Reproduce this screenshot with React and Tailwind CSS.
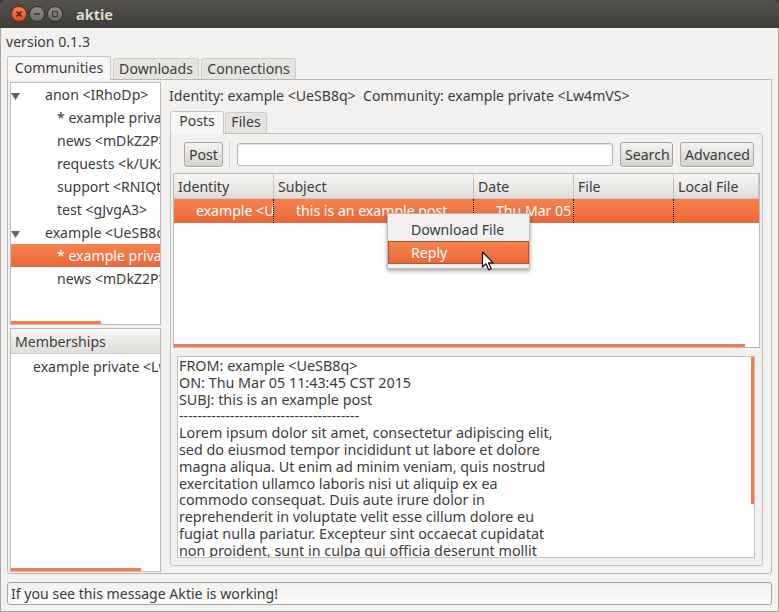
import React from 'react';

const treeRows = [
  { label: 'anon <IRhoDp>', indent: 'pl-[34px]', arrow: true },
  { label: '* example private <Lw4mVS>', indent: 'pl-[46px]' },
  { label: 'news <mDkZ2P>', indent: 'pl-[46px]' },
  { label: 'requests <k/UKxw>', indent: 'pl-[46px]' },
  { label: 'support <RNIQtA>', indent: 'pl-[46px]' },
  { label: 'test <gJvgA3>', indent: 'pl-[46px]' },
  { label: 'example <UeSB8q>', indent: 'pl-[34px]', arrow: true },
  { label: '* example private <Lw4mVS>', indent: 'pl-[46px]', selected: true },
  { label: 'news <mDkZ2P>', indent: 'pl-[46px]' },
];

const columns = [
  { name: 'Identity', width: 'w-[100px]', value: 'example <UeSB8q>', pad: 'pl-[22px]' },
  { name: 'Subject', width: 'w-[200px]', value: 'this is an example post', pad: 'pl-[22px]' },
  { name: 'Date', width: 'w-[100px]', value: 'Thu Mar 05', pad: 'pl-[22px]' },
  { name: 'File', width: 'w-[100px]', value: '', pad: 'pl-[22px]' },
  { name: 'Local File', width: 'flex-1', value: '', pad: 'pl-[22px]' },
];

const body = [
  'FROM: example <UeSB8q>',
  'ON: Thu Mar 05 11:43:45 CST 2015',
  'SUBJ: this is an example post',
  '---------------------------------------',
  'Lorem ipsum dolor sit amet, consectetur adipiscing elit,',
  'sed do eiusmod tempor incididunt ut labore et dolore',
  'magna aliqua. Ut enim ad minim veniam, quis nostrud',
  'exercitation ullamco laboris nisi ut aliquip ex ea',
  'commodo consequat. Duis aute irure dolor in',
  'reprehenderit in voluptate velit esse cillum dolore eu',
  'fugiat nulla pariatur. Excepteur sint occaecat cupidatat',
  'non proident, sunt in culpa qui officia deserunt mollit',
];

function Button({ children, className = '' }) {
  return (
    <button className={`h-[25px] rounded-[3px] border border-[#a8a6a2] bg-gradient-to-b from-[#f5f4f2] to-[#d3d1cc] px-[4px] leading-[22px] text-[#3c3c3c] shadow-[0_1px_0_#fff] ${className}`}>
      {children}
    </button>
  );
}

function Tab({ children, active, className = '' }) {
  if (active) {
    return (
      <div className={`relative z-10 -mb-px flex items-center justify-center rounded-t-[3px] border border-b-0 border-[#c9c7c3] bg-[#f7f6f5] text-[#3c3c3c] ${className}`}>
        {children}
      </div>
    );
  }
  return (
    <div className={`flex items-center justify-center rounded-t-[3px] border border-b-0 border-[#cfcdc9] bg-[#e6e4e1] text-[#3c3c3c] ${className}`}>
      {children}
    </div>
  );
}

function HeaderCell({ children, className = '' }) {
  return (
    <div className={`flex h-full items-center border-r border-[#c9c7c3] bg-gradient-to-b from-[#f8f7f6] to-[#dfddd9] pl-[4px] pt-[2px] text-[#3c3c3c] ${className}`}>
      {children}
    </div>
  );
}

export default function App() {
  return (
    <div className="flex h-[612px] w-[779px] flex-col overflow-hidden bg-[#3c3b37] font-['Noto_Sans',sans-serif] text-[14.1px] text-[#3c3c3c]">
      {/* title bar */}
      <div className="flex h-[28px] shrink-0 items-center rounded-t-[6px] bg-gradient-to-b from-[#55534c] to-[#3c3b37] pl-[11px]">
        <div className="flex h-[16px] w-[16px] items-center justify-center rounded-full border border-[#7d2b12] bg-gradient-to-b from-[#f7865a] to-[#df4a1e] text-[#4a1a0a]">
          <svg width="8" height="8" viewBox="0 0 8 8"><path d="M1.5 1.5l5 5M6.5 1.5l-5 5" stroke="currentColor" strokeWidth="1.5" /></svg>
        </div>
        <div className="ml-[2px] flex h-[16px] w-[16px] items-center justify-center rounded-full border border-[#333] bg-gradient-to-b from-[#908e87] to-[#6c6a63] text-[#3c3b37]">
          <svg width="8" height="8" viewBox="0 0 8 8"><path d="M1 4h6" stroke="currentColor" strokeWidth="1.5" /></svg>
        </div>
        <div className="ml-[2px] flex h-[16px] w-[16px] items-center justify-center rounded-full border border-[#333] bg-gradient-to-b from-[#908e87] to-[#6c6a63] text-[#3c3b37]">
          <svg width="8" height="8" viewBox="0 0 8 8"><rect x="1.5" y="1.5" width="5" height="5" fill="none" stroke="currentColor" strokeWidth="1.2" /></svg>
        </div>
        <span className="ml-[13px] text-[14.5px] font-bold leading-none text-[#dfdbd2]">aktie</span>
      </div>

      {/* window */}
      <div className="flex min-h-0 flex-1 flex-col border-x border-b border-[#a9a7a2] bg-[#f2f1f0] px-[6px]">
        <div className="-ml-px h-[28px] shrink-0 pt-[4px] leading-[20px]">version 0.1.3</div>

        <div className="flex h-[23px] shrink-0 items-end">
          <Tab active className="h-[24px] w-[104px] pb-[2px]">Communities</Tab>
          <Tab className="ml-[2px] h-[21px] w-[86px]">Downloads</Tab>
          <Tab className="ml-[2px] h-[21px] w-[95px]">Connections</Tab>
        </div>

        <div className="flex h-[495px] shrink-0 rounded-b-[3px] border border-[#b9b7b3] bg-[#f2f1f0] pl-[2px] pt-[2px]">
          {/* left column */}
          <div className="flex w-[151px] shrink-0 flex-col">
            <div className="relative h-[243px] overflow-hidden border border-[#bdbbb7] bg-white">
              {treeRows.map((row) => (
                <div
                  key={row.label + row.indent + (row.selected ? 's' : '')}
                  className={`relative h-[23px] whitespace-nowrap leading-[23px] ${row.indent} ${row.selected ? 'bg-gradient-to-b from-[#f6834f] to-[#e9683a] text-white' : ''}`}
                >
                  {row.arrow && (
                    <svg className="absolute left-0 top-[10px]" width="9" height="7" viewBox="0 0 9 7"><path d="M0 0h9L4.5 7z" fill="#66665f" /></svg>
                  )}
                  {row.label}
                </div>
              ))}
              <div className="absolute bottom-0 left-0 h-[3px] w-[90px] bg-[#f47b4a]" />
            </div>
            <div className="relative mt-[3px] h-[244px] overflow-hidden border border-[#bdbbb7] bg-white">
              <div className="flex h-[25px] items-center border-b border-[#c9c7c3] bg-gradient-to-b from-[#f8f7f6] to-[#dfddd9] pl-[4px] pt-[2px]">Memberships</div>
              <div className="mt-px h-[23px] whitespace-nowrap pl-[22px] leading-[23px]">example private &lt;Lw4mVS&gt;</div>
              <div className="absolute bottom-0 left-0 h-[3px] w-[130px] bg-[#f47b4a]" />
            </div>
          </div>

          {/* right column */}
          <div className="ml-[9px] flex min-w-0 flex-1 flex-col">
            <div className="-ml-px flex h-[27px] shrink-0 items-center whitespace-nowrap">
              Identity: example &lt;UeSB8q&gt;&nbsp;&nbsp;Community: example private &lt;Lw4mVS&gt;
            </div>
            <div className="flex h-[24px] shrink-0 items-end">
              <Tab active className="h-[23px] w-[54px] pb-[4px]">Posts</Tab>
              <Tab className="ml-px h-[21px] w-[42px] pb-[3px]">Files</Tab>
            </div>
            <div className="h-[433px] w-[593px] shrink-0 rounded-[3px] border border-[#c4c2be] bg-[#f2f1f0] px-[2px] pt-[8px]">
              {/* toolbar */}
              <div className="flex h-[25px] items-center pl-[11px]">
                <Button className="w-[39px]">Post</Button>
                <div className="ml-[6px] h-[25px] w-px bg-[#d5d3cf]" />
                <div className="ml-[7px] h-[23px] w-[376px] rounded-[3px] border border-[#b5b3af] bg-white shadow-[inset_0_1px_1px_#e0e0e0]" />
                <Button className="ml-[7px] w-[53px]">Search</Button>
                <Button className="ml-[7px] w-[74px]">Advanced</Button>
              </div>

              {/* table */}
              <div className="relative mt-[6px] h-[175px] w-[587px] overflow-hidden border border-[#bdbbb7] bg-white">
                <div className="flex h-[25px] border-b border-[#c9c7c3]">
                  {columns.map((c) => (
                    <HeaderCell key={c.name} className={c.width}>{c.name}</HeaderCell>
                  ))}
                </div>
                <div className="flex h-[24px] bg-gradient-to-b from-[#f6834f] to-[#e9683a] text-white">
                  {columns.map((c) => (
                    <div
                      key={c.name}
                      className={`${c.width} ${c.pad} overflow-hidden whitespace-nowrap border-r border-dotted border-black leading-[24px] last:border-r-0`}
                    >
                      {c.value}
                    </div>
                  ))}
                </div>
                <div className="absolute bottom-0 left-0 h-[3px] w-[571px] bg-[#f47b4a]" />
              </div>

              {/* message */}
              <div className="relative ml-[4px] mt-[8px] h-[202px] w-[578px] overflow-hidden border border-[#c4c2be] bg-white pl-[1px] pt-[1px] text-[14.35px] leading-[16.8px]">
                {body.map((line) => (
                  <div key={line} className="whitespace-nowrap">{line}</div>
                ))}
                <div className="absolute right-0 top-0 h-[147px] w-[3px] bg-[#f47b4a]" />
              </div>
            </div>
          </div>
        </div>

        {/* status */}
        <div className="mt-[8px] flex h-[23px] shrink-0 items-center rounded-[3px] border border-[#a8a6a2] bg-gradient-to-b from-[#f2f1f0] to-[#fbfbfa] pl-[3px]">
          If you see this message Aktie is working!
        </div>
      </div>

      {/* context menu */}
      <div className="absolute left-[387px] top-[213px] h-[56px] w-[143px] border border-[#bdbbb7] bg-[#f2f1f0] shadow-[0_2px_4px_rgba(0,0,0,0.35)]">
        <div className="h-[27px] pl-[23px] leading-[31px]">Download File</div>
        <div className="h-[23px] border border-[#b5532a] bg-gradient-to-b from-[#f6834f] to-[#e9683a] pl-[22px] leading-[22px] text-white">Reply</div>
      </div>

      {/* pointer */}
      <svg className="absolute left-[481px] top-[251px]" width="15" height="21" viewBox="0 0 15 21">
        <path d="M1.5 1v15l3.5-3.2 2.6 6 2.6-1.1-2.6-5.8h4.6z" fill="#fff" stroke="#111" strokeWidth="1.2" strokeLinejoin="round" />
      </svg>
    </div>
  );
}
